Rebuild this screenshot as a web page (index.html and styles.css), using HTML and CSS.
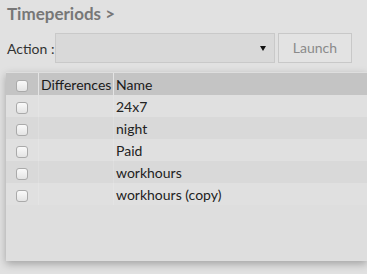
FILE: index.html
```html
<!DOCTYPE html>
<html>
<head>
<meta charset="utf-8">
<link rel="stylesheet" href="styles.css">
</head>
<body>
<div class="page">
  <h1 class="title">Timeperiods &gt;</h1>
  <div class="actions">
    <span class="action-label">Action :</span>
    <div class="select"><span class="arrow"></span></div>
    <button class="launch">Launch</button>
  </div>
  <div class="panel">
    <div class="row head">
      <div class="cell c-chk"><span class="chk"></span></div>
      <div class="cell c-diff">Differences</div>
      <div class="cell c-name">Name</div>
    </div>
    <div class="row odd"><div class="cell c-chk"><span class="chk"></span></div><div class="cell c-diff"></div><div class="cell c-name">24x7</div></div>
    <div class="row even"><div class="cell c-chk"><span class="chk"></span></div><div class="cell c-diff"></div><div class="cell c-name">night</div></div>
    <div class="row odd"><div class="cell c-chk"><span class="chk"></span></div><div class="cell c-diff"></div><div class="cell c-name">Paid</div></div>
    <div class="row even"><div class="cell c-chk"><span class="chk"></span></div><div class="cell c-diff"></div><div class="cell c-name">workhours</div></div>
    <div class="row odd"><div class="cell c-chk"><span class="chk"></span></div><div class="cell c-diff"></div><div class="cell c-name">workhours (copy)</div></div>
  </div>
</div>
</body>
</html>
```
FILE: styles.css
```css
html, body {
  margin: 0;
  padding: 0;
  background: #e1e1e1;
  overflow: hidden;
  height: 274px;
}
body {
  font-family: Lato, "Open Sans", sans-serif;
  color: #222;
}
.page {
  padding: 3px 0 0 6px;
}
.title {
  margin: 0 0 0 1px;
  font-size: 17px;
  font-weight: bold;
  color: #777;
  line-height: 22px;
}
.actions {
  display: flex;
  align-items: center;
  margin-top: 8px;
  height: 30px;
}
.action-label {
  font-size: 14px;
  color: #333;
  margin-left: 1px;
  width: 48px;
}
.select {
  width: 218px;
  height: 28px;
  border: 1px solid #c9c9c9;
  background: #d9d9d9;
  position: relative;
}
.arrow {
  position: absolute;
  right: 8px;
  top: 12px;
  width: 0;
  height: 0;
  border-left: 3px solid transparent;
  border-right: 3px solid transparent;
  border-top: 5px solid #111;
}
.launch {
  margin-left: 3px;
  width: 74px;
  height: 30px;
  margin-top: -1px;
  border: 1px solid #c8c8c8;
  background: #e3e3e3;
  color: #8a8a8a;
  font-family: Lato, sans-serif;
  font-size: 14px;
  padding: 0;
}
.panel {
  margin-top: 9px;
  height: 189px;
  background: #dedede;
  box-shadow: 0 3px 8px rgba(0,0,0,0.28);
  overflow: hidden;
}
.row {
  display: flex;
  height: 22px;
  font-size: 14px;
}
.row.head {
  margin-top: 1px;
  background: #c4c4c4;
  color: #1a1a1a;
}
.row.odd { background: #e0e0e0; }
.row.even { background: #d9d9d9; }
.cell {
  display: flex;
  align-items: center;
  border-right: 1px solid rgba(255,255,255,0.15);
  box-sizing: border-box;
}
.head .cell { border-right-color: rgba(255,255,255,0.55); }
.c-chk { width: 33px; }
.c-diff { width: 75px; padding-left: 2px; }
.c-name { flex: 1; padding-left: 2px; border-right: none; }
.chk {
  display: block;
  width: 10px;
  height: 10px;
  margin: 3px 0 0 10px;
  border: 1px solid #aaa;
  border-radius: 3px;
  background: linear-gradient(#fafafa, #e4e4e4);
}
```
